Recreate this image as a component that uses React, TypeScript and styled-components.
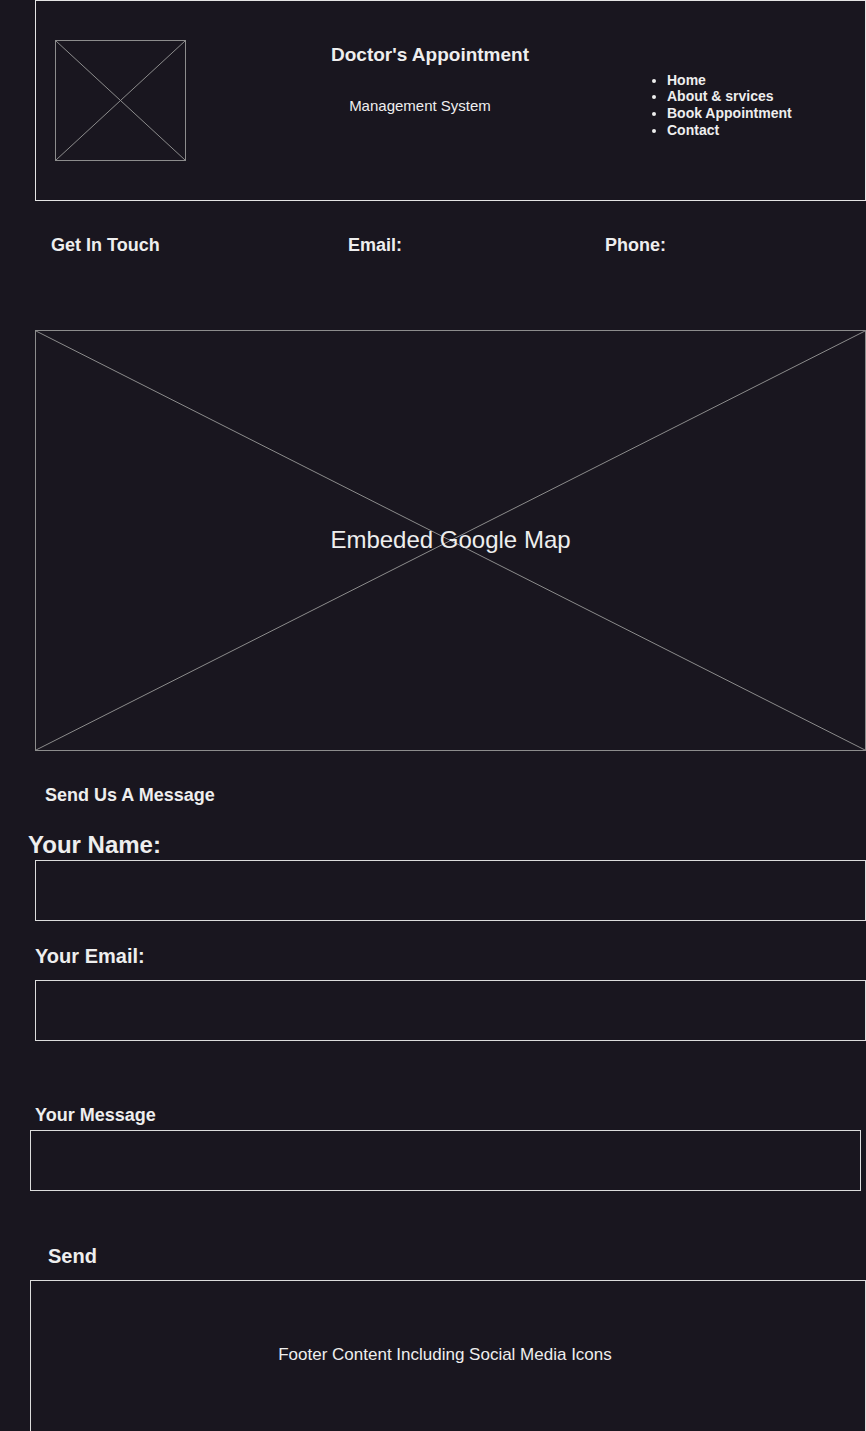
import styled, { createGlobalStyle } from "styled-components"

const GlobalStyle = createGlobalStyle`
  html, body {
    margin: 0;
    padding: 0;
    background: #19161f;
    overflow: hidden;
  }
  body {
    font-family: "Liberation Sans", Arial, sans-serif;
    color: #eeeeee;
  }
`

const Page = styled.div`
  display: flex;
  flex-direction: column;
  width: 866px;
  min-height: 1431px;
`

const Header = styled.header`
  margin-left: 35px;
  width: 831px;
  height: 201px;
  box-sizing: border-box;
  border: 1px solid #e4e4e4;
  display: flex;
  align-items: flex-start;
  padding: 39px 0 0 19px;
`

const Placeholder = styled.div<{ $w: string; $h: number; $left: number }>`
  display: grid;
  box-sizing: border-box;
  width: ${p => p.$w};
  height: ${p => p.$h}px;
  margin-left: ${p => p.$left}px;
  border: 1px solid #8c8c8c;
  flex-shrink: 0;

  > * {
    grid-area: 1 / 1;
  }
`

const Cross = () => (
  <svg width="100%" height="100%" viewBox="0 0 100 100" preserveAspectRatio="none" style={{ display: "block" }}>
    <line x1="0" y1="0" x2="100" y2="100" stroke="#8c8c8c" strokeWidth="1" vectorEffect="non-scaling-stroke" />
    <line x1="100" y1="0" x2="0" y2="100" stroke="#8c8c8c" strokeWidth="1" vectorEffect="non-scaling-stroke" />
  </svg>
)

const MapCaption = styled.div`
  display: flex;
  align-items: center;
  justify-content: center;
  font-size: 24px;
  color: #eeeeee;
`

const Brand = styled.div`
  margin-left: 114px;
  width: 260px;
  display: flex;
  flex-direction: column;
  text-align: center;
`

const Title = styled.h3`
  margin: 4px 0 0;
  font-size: 19px;
  line-height: 21.5px;
  font-weight: 700;
`

const Subtitle = styled.p`
  margin: 31px 20px 0 0;
  font-size: 15px;
  line-height: 17px;
`

const Nav = styled.ul`
  margin: 31.5px 0 0 94px;
  padding-left: 13px;
  list-style: disc;
  font-size: 14px;
  font-weight: 700;
  line-height: 16.7px;
`

const ContactRow = styled.div`
  margin-top: 33.65px;
  padding-left: 51px;
  display: grid;
  grid-template-columns: 297px 257px auto;
  font-size: 18px;
  font-weight: 700;
  line-height: 20.7px;
`

const MapBox = styled(Placeholder)`
  margin-top: 74.65px;
`

const Label = styled.div<{ $size: number; $indent: number; $gap: number }>`
  margin-top: ${p => p.$gap}px;
  padding-left: ${p => p.$indent}px;
  font-size: ${p => p.$size}px;
  line-height: 1.15;
  font-weight: 700;
`

const Field = styled.input<{ $gap: number; $indent: number }>`
  display: block;
  box-sizing: border-box;
  margin: ${p => p.$gap}px 0 0 ${p => p.$indent}px;
  width: 831px;
  height: 61px;
  background: transparent;
  border: 1px solid #dcdcdc;
  outline: none;
  color: #eeeeee;
`

const MessageBox = styled.textarea`
  display: block;
  box-sizing: border-box;
  margin: 4.65px 0 0 30px;
  width: 831px;
  height: 61px;
  background: transparent;
  border: 1px solid #dcdcdc;
  outline: none;
  resize: none;
  color: #eeeeee;
`

const SendButton = styled.button`
  align-self: flex-start;
  margin: 54.5px 0 0 48px;
  padding: 0;
  background: none;
  border: none;
  color: #eeeeee;
  font-family: inherit;
  font-size: 20px;
  line-height: 23px;
  font-weight: 700;
`

const Footer = styled.footer`
  margin: 11.5px 0 0 30px;
  width: 836px;
  height: 170px;
  box-sizing: border-box;
  border: 1px solid #dcdcdc;
  padding: 64px 6px 0 0;
  text-align: center;
  font-size: 17px;
  line-height: 20px;
`

export default function App() {
  return (
    <Page>
      <GlobalStyle />
      <Header>
        <Placeholder $w="131px" $h={121} $left={0}>
          <Cross />
        </Placeholder>
        <Brand>
          <Title>Doctor's Appointment</Title>
          <Subtitle>Management System</Subtitle>
        </Brand>
        <Nav>
          <li>Home</li>
          <li>About &amp; srvices</li>
          <li>Book Appointment</li>
          <li>Contact</li>
        </Nav>
      </Header>

      <ContactRow>
        <span>Get In Touch</span>
        <span>Email:</span>
        <span>Phone:</span>
      </ContactRow>

      <MapBox $w="831px" $h={421} $left={35}>
        <Cross />
        <MapCaption>Embeded Google Map</MapCaption>
      </MapBox>

      <Label $size={18} $indent={45} $gap={33.65}>Send Us A Message</Label>
      <Label $size={24} $indent={28} $gap={25.85}>Your Name:</Label>
      <Field $gap={1.2} $indent={35} />
      <Label $size={20} $indent={35} $gap={24.5}>Your Email:</Label>
      <Field $gap={11.5} $indent={35} />
      <Label $size={18} $indent={35} $gap={63.65}>Your Message</Label>
      <MessageBox />
      <SendButton>Send</SendButton>

      <Footer>Footer Content Including Social Media Icons</Footer>
    </Page>
  )
}
